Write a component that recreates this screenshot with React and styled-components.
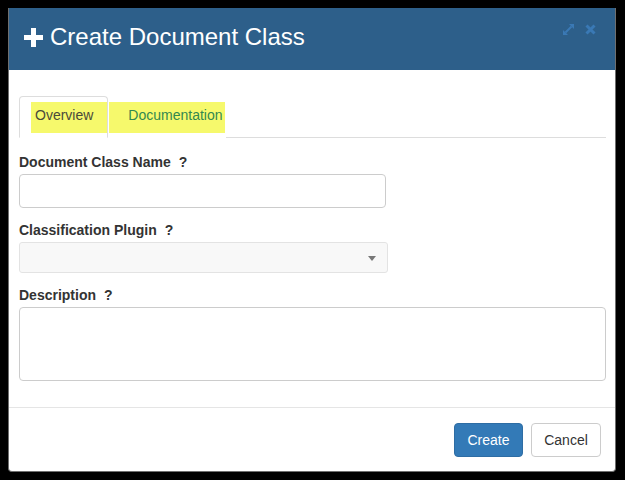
import React from "react";
import styled, { createGlobalStyle } from "styled-components";

const Global = createGlobalStyle`
  html, body { margin: 0; padding: 0; background: #000; }
  body { font-family: "Liberation Sans", Arial, sans-serif; font-size: 14px; color: #333; }
  * { box-sizing: border-box; }
`;

const Page = styled.div`
  padding: 8px 9px 8px 8px;
  width: 625px;
  height: 480px;
`;

const Modal = styled.div`
  width: 608px;
  height: 464px;
  background: #fff;
  border: 1px solid #6f6f6f;
  border-top: none;
  border-radius: 0 0 4px 4px;
  display: flex;
  flex-direction: column;
  overflow: hidden;
`;

const Header = styled.div`
  height: 62px;
  background: #2d5f8a;
  display: flex;
  align-items: flex-start;
  padding: 0 19px 0 15px;
  flex-shrink: 0;
`;

const Title = styled.h4`
  margin: 0;
  display: flex;
  align-items: center;
  gap: 7px;
  height: 62px;
  font-family: "Liberation Sans", Arial, sans-serif;
  font-weight: normal;
  font-size: 24px;
  color: #fff;
  flex: 1;
  line-height: 1;
  padding-bottom: 4px;
`;

const Tools = styled.div`
  display: flex;
  gap: 11px;
  padding-top: 16px;
`;

const ToolIcon = styled.svg`
  display: block;
  color: #3a79b5;
`;

const Body = styled.div`
  flex: 1;
  padding: 26px 9px 0 10px;
`;

const Nav = styled.div`
  display: flex;
  border-bottom: 1px solid #ddd;
  margin-bottom: 14px;
`;

const Tab = styled.div`
  border: 1px solid ${(p) => (p.$active ? "#ddd" : "transparent")};
  border-bottom-color: ${(p) => (p.$active ? "#fff" : "transparent")};
  border-radius: 4px 4px 0 0;
  margin-bottom: -1px;
  padding: 5px 0 4px ${(p) => (p.$active ? "11px" : "0")};
  background: #fff;
`;

const Mark = styled.span`
  display: block;
  height: 31px;
  line-height: 26px;
  background: #f6f96c;
  color: ${(p) => p.$color};
  padding: 0 ${(p) => p.$pr}px 5px ${(p) => p.$pl}px;
  white-space: nowrap;
`;

const Group = styled.div`
  margin-bottom: 12px;
`;

const Label = styled.label`
  display: block;
  font-weight: bold;
  font-size: 14px;
  line-height: 20px;
  margin-bottom: 2px;
  color: #333;
`;

const Help = styled.span`
  margin-left: 8px;
`;

const Input = styled.div`
  width: ${(p) => p.$w}px;
  height: ${(p) => p.$h}px;
  border: 1px solid #ccc;
  border-radius: 4px;
  background: #fff;
`;

const Select = styled.div`
  width: 369px;
  height: 31px;
  border: 1px solid #e3e3e3;
  border-radius: 3px;
  background: #f8f8f8;
  display: flex;
  align-items: center;
  justify-content: flex-end;
  padding-right: 11px;
`;

const Caret = styled.span`
  width: 0;
  height: 0;
  border-left: 4px solid transparent;
  border-right: 4px solid transparent;
  border-top: 5px solid #777;
  margin-top: 2px;
`;

const Footer = styled.div`
  border-top: 1px solid #e5e5e5;
  padding: 15px 14px 14px 0;
  display: flex;
  justify-content: flex-end;
  gap: 8px;
  flex-shrink: 0;
`;

const Button = styled.button`
  height: 34px;
  width: ${(p) => p.$w}px;
  font-family: "Liberation Sans", Arial, sans-serif;
  font-size: 14px;
  border-radius: 4px;
  border: 1px solid ${(p) => (p.$primary ? "#2e6da4" : "#ccc")};
  background: ${(p) => (p.$primary ? "#337ab7" : "#fff")};
  color: ${(p) => (p.$primary ? "#fff" : "#333")};
  padding: 0;
  cursor: pointer;
`;

export default function App() {
  return (
    <Page>
      <Global />
      <Modal>
        <Header>
          <Title>
            <svg width="19" height="19" viewBox="0 0 19 19">
              <path d="M7 0h5v7h7v5h-7v7H7v-7H0V7h7z" fill="#fff" />
            </svg>
            Create Document Class
          </Title>
          <Tools>
            <ToolIcon width="11" height="11" viewBox="0 0 11 11">
              <path d="M2.5 8.5L8.5 2.5" stroke="currentColor" strokeWidth="2" />
              <path d="M11 0L11 5L6 0Z" fill="currentColor" />
              <path d="M0 11L0 6L5 11Z" fill="currentColor" />
            </ToolIcon>
            <ToolIcon width="11" height="11" viewBox="0 0 11 11">
              <path d="M1.5 1.5L9.5 9.5M9.5 1.5L1.5 9.5" stroke="currentColor" strokeWidth="3" />
            </ToolIcon>
          </Tools>
        </Header>
        <Body>
          <Nav>
            <Tab $active>
              <Mark $color="#4a4a3a" $pl={4} $pr={14}>Overview</Mark>
            </Tab>
            <Tab>
              <Mark $color="#33884f" $pl={19} $pr={2}>Documentation</Mark>
            </Tab>
          </Nav>
          <Group>
            <Label>Document Class Name<Help>?</Help></Label>
            <Input $w={367} $h={34} />
          </Group>
          <Group>
            <Label>Classification Plugin<Help>?</Help></Label>
            <Select><Caret /></Select>
          </Group>
          <Group>
            <Label>Description<Help>?</Help></Label>
            <Input $w={587} $h={74} />
          </Group>
        </Body>
        <Footer>
          <Button $primary $w={69}>Create</Button>
          <Button $w={70}>Cancel</Button>
        </Footer>
      </Modal>
    </Page>
  );
}
